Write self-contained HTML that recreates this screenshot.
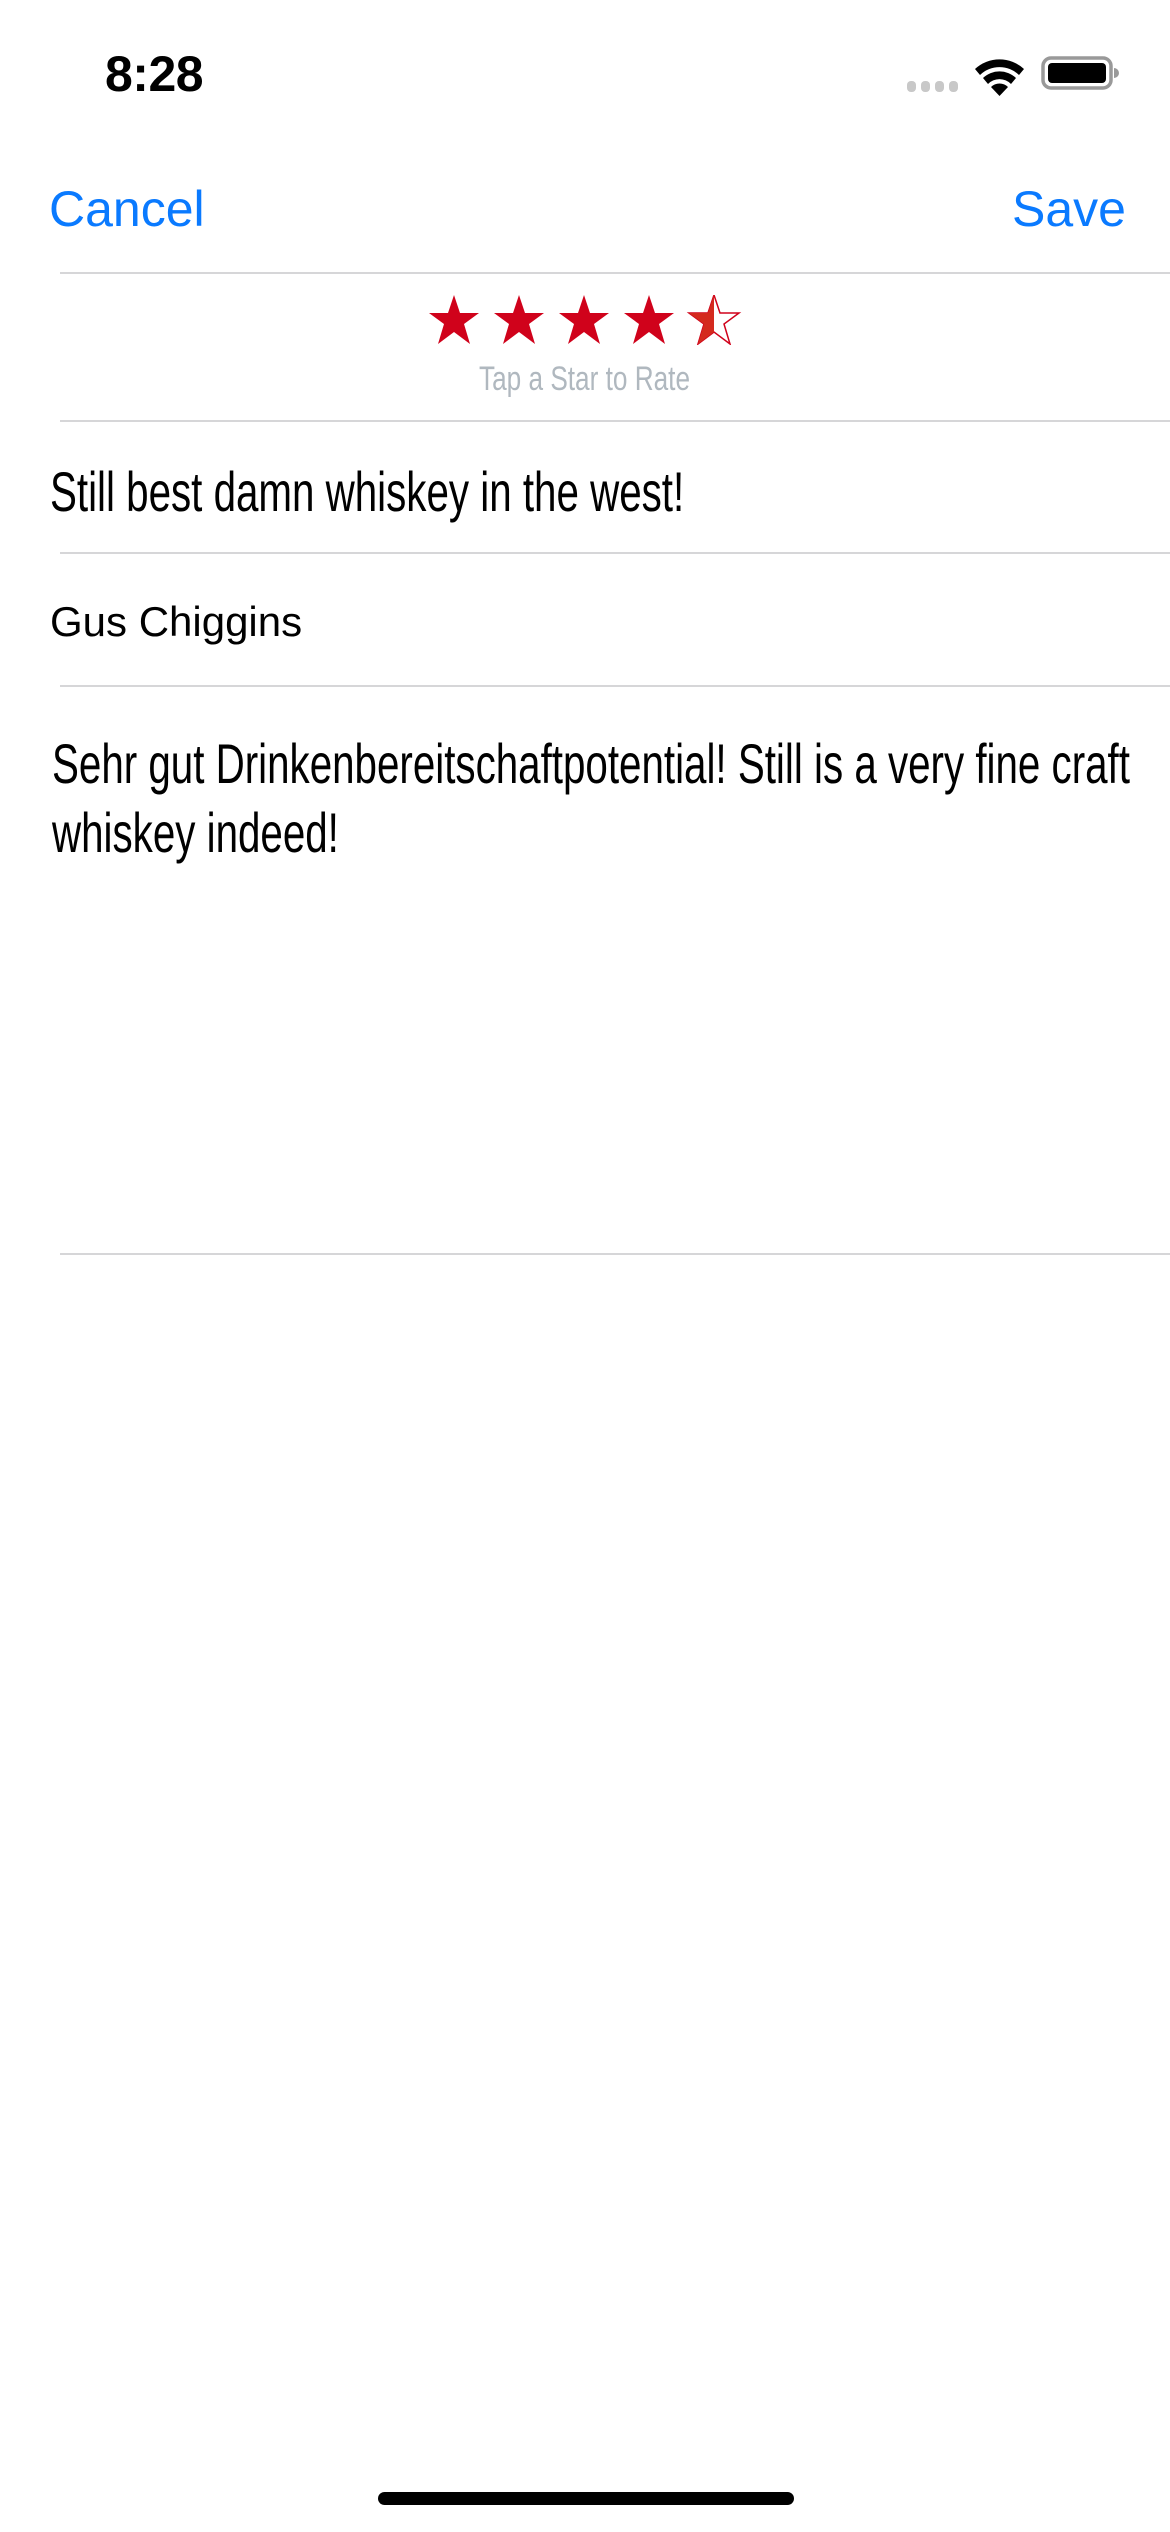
<!DOCTYPE html>
<html><head><meta charset="utf-8"><style>
html,body{margin:0;padding:0;background:#fff;width:1170px;height:2532px;overflow:hidden;position:relative;font-family:"Liberation Sans",sans-serif}
.a{position:absolute;white-space:nowrap}
.sep{position:absolute;left:60px;right:0;height:2px;background:#d6d6d8}
.cond{transform-origin:0 0;display:inline-block}
</style></head><body>
<div class="a" style="left:105px;top:45px;font-size:50px;font-weight:bold;letter-spacing:-0.5px">8:28</div>
<svg class="a" style="left:900px;top:50px" width="230" height="50" viewBox="900 50 230 50">
<g fill="#c8c8c8"><rect x="907" y="81" width="9" height="11" rx="4"/><rect x="921" y="81" width="9" height="11" rx="4"/><rect x="935" y="81" width="9" height="11" rx="4"/><rect x="949" y="81" width="9" height="11" rx="4"/></g>
<path d="M975 69 A36 36 0 0 1 1024 69 L1019 75 A28 28 0 0 0 980 75 Z" fill="#000"/>
<path d="M983 78 A24 24 0 0 1 1016 78 L1011 84 A16 16 0 0 0 988 84 Z" fill="#000"/>
<path d="M991 87 A12 12 0 0 1 1008 87 L999.5 96 Z" fill="#000"/>
<rect x="1043" y="58" width="68" height="30" rx="8" fill="none" stroke="#999" stroke-width="3.5"/>
<rect x="1048" y="63" width="58" height="20" rx="4" fill="#000"/>
<path d="M1114 68 a5 5 0 0 1 0 10 z" fill="#999"/>
</svg>
<div class="a" style="left:49px;top:180px;font-size:50px;color:#0a7aff">Cancel</div>
<div class="a" style="left:1012px;top:180px;font-size:50px;color:#0a7aff">Save</div>
<div class="sep" style="top:272px"></div>
<svg class="a" style="left:429px;top:295px" width="320" height="50" viewBox="0 0 320 50">
<defs><polygon id="s" points="25,0 31,18 50,18 35,29 41,49 25,37 9,49 15,29 0,18 19,18"/>
<clipPath id="h"><rect x="0" y="0" width="25" height="50"/></clipPath></defs>
<use href="#s" x="0" fill="#d0021b"/><use href="#s" x="65" fill="#d0021b"/><use href="#s" x="130" fill="#d0021b"/><use href="#s" x="195" fill="#d0021b"/>
<g transform="translate(260,0)"><use href="#s" fill="#fff" stroke="#d0021b" stroke-width="1.5"/><use href="#s" fill="#d42a1e" clip-path="url(#h)"/></g>
</svg>
<div class="a" style="left:479px;top:360px;font-size:34px;color:#b0b8bf"><span class="cond" style="transform:scaleX(0.77)">Tap a Star to Rate</span></div>
<div class="sep" style="top:420px"></div>
<div class="a" style="left:50px;top:459px;font-size:56px;color:#000"><span class="cond" style="transform:scaleX(0.72)">Still best damn whiskey in the west!</span></div>
<div class="sep" style="top:552px"></div>
<div class="a" style="left:50px;top:598px;font-size:42px;color:#000">Gus Chiggins</div>
<div class="sep" style="top:685px"></div>
<div class="a" style="left:52px;top:731px;font-size:56px;color:#000"><span class="cond" style="transform:scaleX(0.72)">Sehr gut Drinkenbereitschaftpotential! Still is a very fine craft</span></div>
<div class="a" style="left:52px;top:800px;font-size:56px;color:#000"><span class="cond" style="transform:scaleX(0.72)">whiskey indeed!</span></div>
<div class="sep" style="top:1253px"></div>
<div class="a" style="left:378px;top:2492px;width:416px;height:13px;border-radius:7px;background:#000"></div>
</body></html>
